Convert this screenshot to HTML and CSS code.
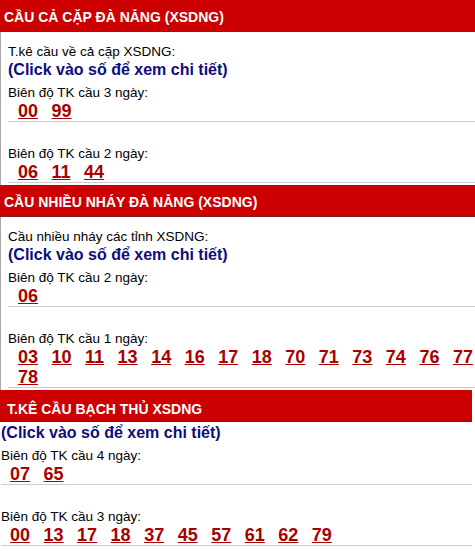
FILE: index.html
```html
<!DOCTYPE html>
<html lang="vi">
    <head>
        <meta charset="UTF-8" />
        <meta name="viewport" content="width=device-width, initial-scale=1.0" />
        <title>Cầu XSDNG</title>
        <link rel="stylesheet" href="styles.css">
    </head>

    <body>
        <div class="box">
            <div class="box-title">CẦU CẢ CẶP ĐÀ NẴNG (XSDNG)</div>
            <div class="box-body">
                <div class="note">T.kê cầu về cả cặp XSDNG:</div>
                <div class="hint">(Click vào số để xem chi tiết)</div>
                <div class="group">
                    <div class="label">Biên độ TK cầu 3 ngày:</div>
                    <div class="nums">
                        <a href="#">00</a>
                        <a href="#">99</a>
                    </div>
                </div>
                <div class="group next">
                    <div class="label">Biên độ TK cầu 2 ngày:</div>
                    <div class="nums">
                        <a href="#">06</a>
                        <a href="#">11</a>
                        <a href="#">44</a>
                    </div>
                </div>
            </div>
        </div>

        <div class="box">
            <div class="box-title">CẦU NHIỀU NHÁY ĐÀ NẴNG (XSDNG)</div>
            <div class="box-body">
                <div class="note">Cầu nhiều nháy các tỉnh XSDNG:</div>
                <div class="hint">(Click vào số để xem chi tiết)</div>
                <div class="group">
                    <div class="label">Biên độ TK cầu 2 ngày:</div>
                    <div class="nums">
                        <a href="#">06</a>
                    </div>
                </div>
                <div class="group next">
                    <div class="label">Biên độ TK cầu 1 ngày:</div>
                    <div class="nums">
                        <a href="#">03</a>
                        <a href="#">10</a>
                        <a href="#">11</a>
                        <a href="#">13</a>
                        <a href="#">14</a>
                        <a href="#">16</a>
                        <a href="#">17</a>
                        <a href="#">18</a>
                        <a href="#">70</a>
                        <a href="#">71</a>
                        <a href="#">73</a>
                        <a href="#">74</a>
                        <a href="#">76</a>
                        <a href="#">77</a>
                        <a href="#">78</a>
                    </div>
                </div>
            </div>
        </div>

        <div class="box plain">
            <div class="box-title">T.KÊ CẦU BẠCH THỦ XSDNG</div>
            <div class="box-body">
                <div class="hint">(Click vào số để xem chi tiết)</div>
                <div class="group">
                    <div class="label">Biên độ TK cầu 4 ngày:</div>
                    <div class="nums">
                        <a href="#">07</a>
                        <a href="#">65</a>
                    </div>
                </div>
                <div class="group next">
                    <div class="label">Biên độ TK cầu 3 ngày:</div>
                    <div class="nums">
                        <a href="#">00</a>
                        <a href="#">13</a>
                        <a href="#">17</a>
                        <a href="#">18</a>
                        <a href="#">37</a>
                        <a href="#">45</a>
                        <a href="#">57</a>
                        <a href="#">61</a>
                        <a href="#">62</a>
                        <a href="#">79</a>
                    </div>
                </div>
            </div>
        </div>
    </body>
</html>
```

FILE: styles.css
```css
body {
    margin: 0;
    padding: 0;
    font-family: "Liberation Sans", Arial, sans-serif;
    color: #000;
    background: #fff;
}

.box {
    overflow: hidden;
}

.box-title {
    background-color: #cc0000;
    color: #fff;
    font-weight: bold;
    font-size: 14px;
    line-height: 16px;
    padding: 9px 4px 6px;
    border-bottom: 1px solid #7a2020;
}

.box-body {
    border-left: 1px solid #a8a8a8;
    padding: 11px 0 2px 7px;
}

.note {
    font-size: 13.5px;
    line-height: 17px;
}

.hint {
    color: #0d0d80;
    font-weight: bold;
    font-size: 16px;
    line-height: 20px;
}

.group {
    padding-top: 4px;
    border-bottom: 1px solid #cccccc;
}

.group.next {
    padding-top: 23px;
}

.label {
    font-size: 13.5px;
    line-height: 17px;
}

.nums {
    display: flex;
    flex-wrap: wrap;
    column-gap: 13.5px;
    padding-left: 10px;
}

.nums a {
    color: #a80000;
    font-weight: bold;
    font-size: 18px;
    line-height: 20px;
    text-decoration: underline;
}

/* last block sits flush left, no side border */
.plain {
    width: 472px;
}

.plain .box-title {
    padding: 11px 7px 4px;
    border-bottom-color: #333;
}

.plain .box-body {
    border-left: none;
    padding: 1px 0 0 1px;
}

.plain .nums {
    padding-left: 9px;
}
```
